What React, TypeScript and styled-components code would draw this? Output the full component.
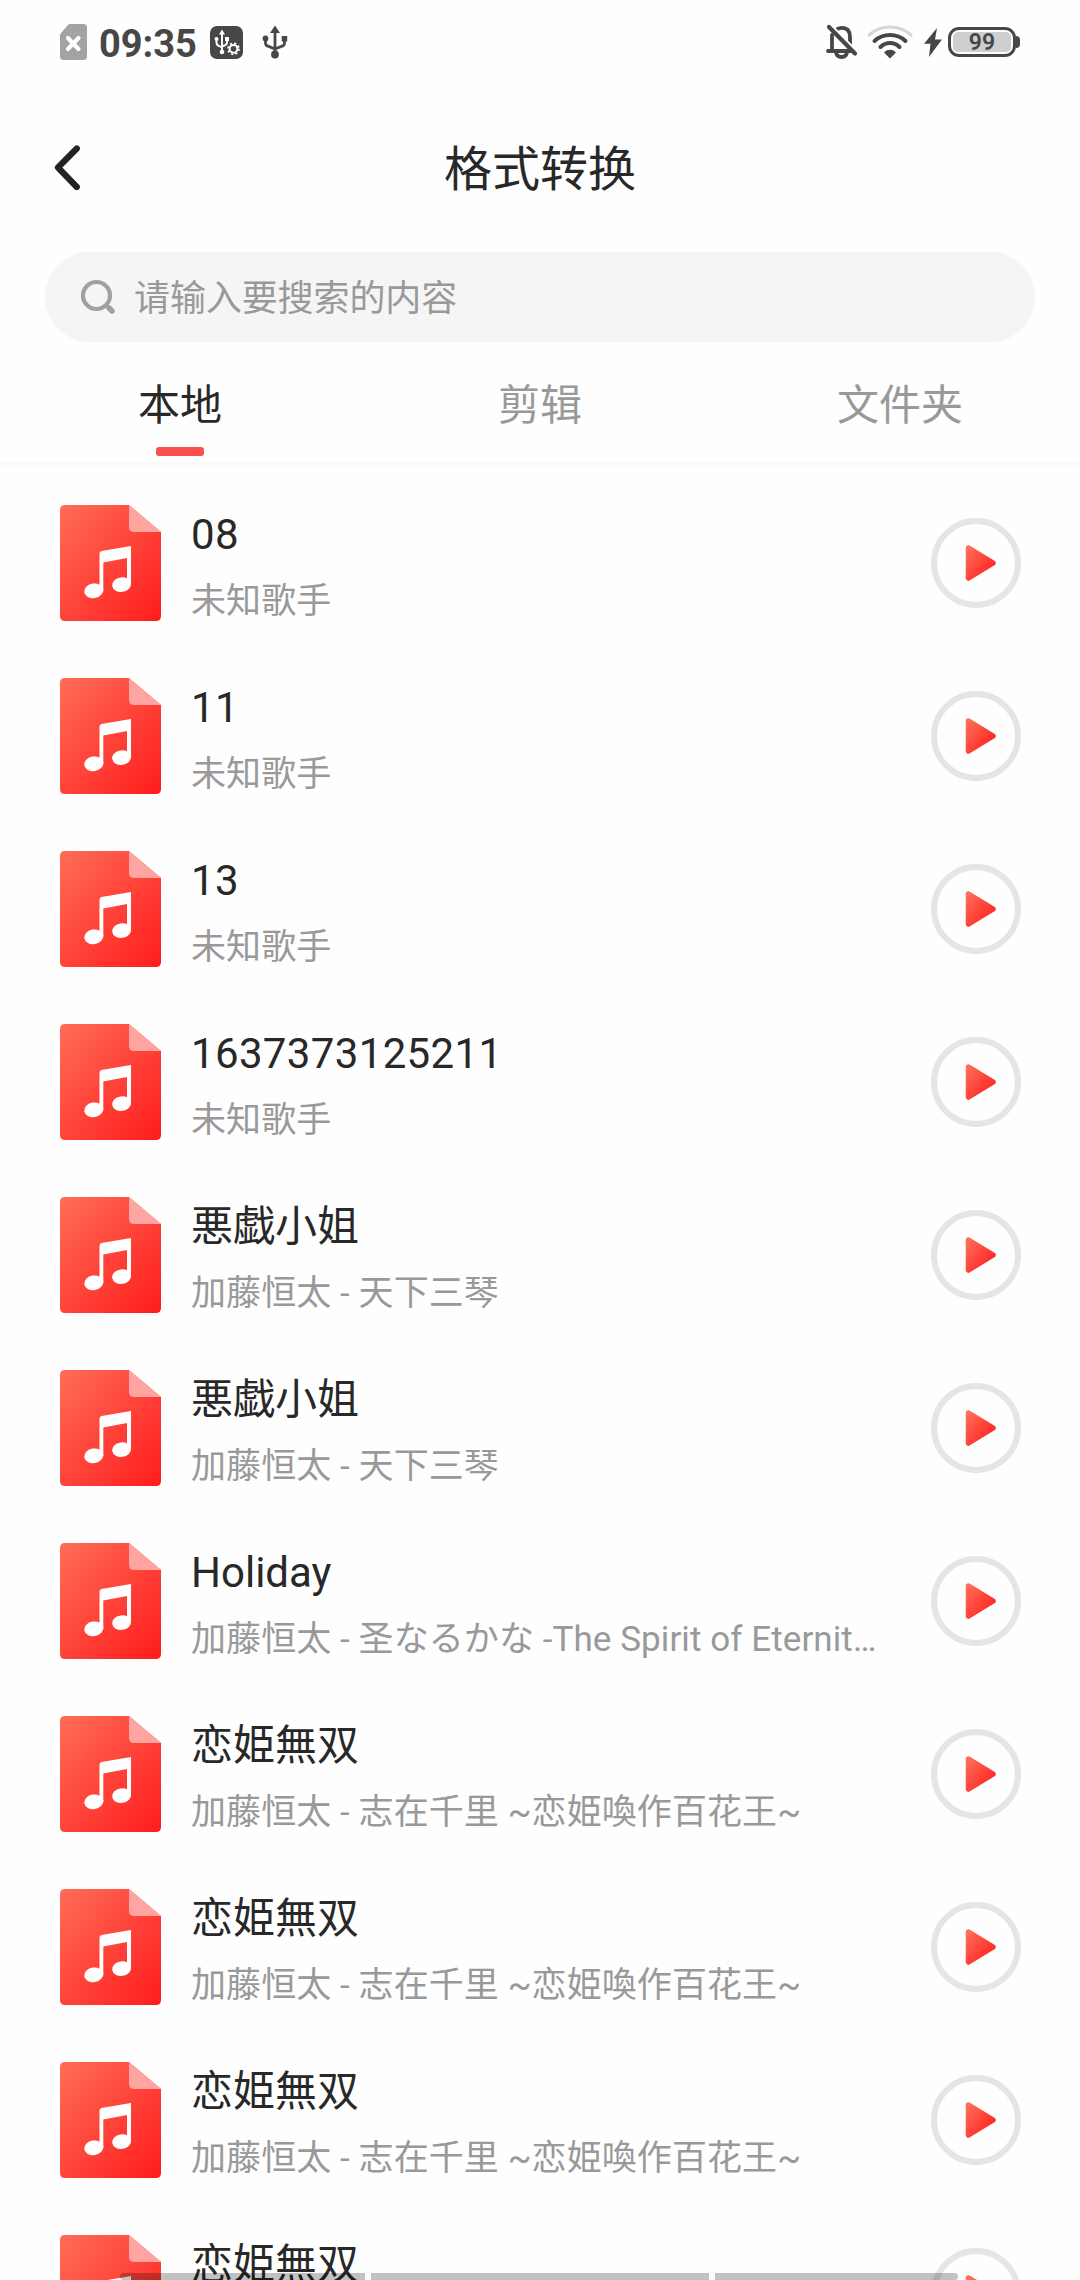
import React from "react";
import styled, { createGlobalStyle } from "styled-components";

const GlobalStyle = createGlobalStyle`
  *, *::before, *::after { box-sizing: border-box; }
  html, body { margin: 0; padding: 0; background: #fefefe; }
  body {
    font-family: Roboto, "Noto Sans CJK SC", "Noto Sans CJK JP", sans-serif;
    color: #282828;
  }
  svg { display: block; flex: none; }
  button { font: inherit; color: inherit; background: none; border: 0; padding: 0; }
`;

const Screen = styled.main`
  position: relative;
  display: flex;
  flex-direction: column;
  width: 1080px;
  height: 2280px;
  overflow: hidden;
  background: #fefefe;
`;

const StatusBar = styled.header`
  flex: none;
  display: flex;
  align-items: center;
  justify-content: space-between;
  height: 84px;
  padding: 0 60px;
`;

const StatusGroup = styled.div<{ $gap: number }>`
  display: flex;
  align-items: center;
  gap: ${(p) => p.$gap}px;
`;

const Clock = styled.time`
  width: 97px;
  margin: 3px 0 0 -2px;
  font-size: 38px;
  font-weight: 700;
  line-height: 44px;
  color: #474747;
  white-space: nowrap;
`;

const UsbGroup = styled.div`
  display: flex;
  align-items: center;
  gap: 19px;
`;

const Power = styled.div`
  display: flex;
  align-items: center;
  gap: 6px;
`;

const Battery = styled.div`
  display: flex;
  align-items: center;
`;

const BatteryBody = styled.div`
  width: 68px;
  height: 30px;
  padding: 2px;
  border: 3px solid #474747;
  border-radius: 11px;
`;

const BatteryLevel = styled.div`
  height: 20px;
  border-radius: 5px;
  background: #cfcfcf;
  font-size: 23px;
  font-weight: 600;
  line-height: 21px;
  text-align: center;
  color: #474747;
`;

const BatteryTip = styled.i`
  width: 4px;
  height: 12px;
  border-radius: 0 4px 4px 0;
  background: #474747;
`;

const TitleBar = styled.div`
  flex: none;
  display: grid;
  grid-template-columns: 135px 1fr 135px;
  align-items: center;
  height: 168px;
`;

const BackButton = styled.button`
  display: flex;
  padding-left: 52px;
`;

const Title = styled.h1`
  margin: 0;
  padding-top: 3px;
  font-size: 48px;
  font-weight: 400;
  line-height: 60px;
  text-align: center;
`;

const SearchBox = styled.div`
  flex: none;
  display: flex;
  align-items: center;
  gap: 18px;
  height: 90px;
  margin: 0 45px;
  padding-left: 35px;
  border-radius: 45px;
  background: #f5f5f5;
`;

const Placeholder = styled.span`
  padding-top: 4px;
  font-size: 36px;
  line-height: 44px;
  letter-spacing: -0.1px;
  color: #999;
`;

const Tabs = styled.nav`
  flex: none;
  display: grid;
  grid-template-columns: repeat(3, 1fr);
  height: 120px;
  background: #fefefe;
  box-shadow: 0 3px 5px rgba(0, 0, 0, 0.035);
`;

const Tab = styled.button<{ $active: boolean }>`
  display: flex;
  flex-direction: column;
  align-items: center;
  padding-top: 34px;
  font-size: 42px;
  line-height: 60px;
  color: ${(p) => (p.$active ? "#282828" : "#999")};

  &::after {
    content: "";
    width: 48px;
    height: 9px;
    margin-top: 11px;
    border-radius: 3px;
    background: ${(p) => (p.$active ? "#f8514f" : "transparent")};
  }
`;

const SongList = styled.ul`
  flex: 1;
  min-height: 0;
  margin: 0;
  padding: 14px 0 0;
  overflow: hidden;
  list-style: none;
`;

const SongRow = styled.li`
  display: flex;
  align-items: center;
  height: 173px;
  padding: 0 59px 0 60px;
`;

const SongText = styled.div`
  flex: 1;
  min-width: 0;
  margin-left: 30px;
  padding-top: 9px;
`;

const SongTitle = styled.div<{ $numeric: boolean }>`
  font-size: 42px;
  line-height: 50px;
  letter-spacing: ${(p) => (p.$numeric ? "0.35px" : "normal")};
  white-space: nowrap;
`;

const SongArtist = styled.div`
  width: 691px;
  margin-top: 20px;
  font-size: 35px;
  line-height: 44px;
  letter-spacing: 0.08px;
  color: #999;
  overflow: hidden;
  text-overflow: ellipsis;
  white-space: nowrap;
`;

const PlayButton = styled.button`
  flex: none;
  display: flex;
  align-items: center;
  width: 90px;
  height: 90px;
  padding-left: 28px;
  border: 6px solid #e5e5e5;
  border-radius: 50%;
`;

const NavHints = styled.div`
  position: absolute;
  left: 120px;
  bottom: 0;
  display: grid;
  grid-template-columns: 245px 338px 243px;
  gap: 6px;
  height: 7px;
`;

const NavHint = styled.i`
  background: rgba(0, 0, 0, 0.24);

  &:first-child { border-radius: 4px 0 0 4px; }
  &:last-child { border-radius: 0 4px 4px 0; }
`;

const ink = "#474747";

const SimIcon = () => (
  <svg width="27" height="36" viewBox="0 0 27 36">
    <path d="M10 0H23.5Q27 0 27 3.5V32.500Q27 36 23.500 36H3.500Q0 36 0 32.500V11.500Q0 10 1 9L8 1Q9 0 10 0Z" fill="#a3a3a3" />
    <path d="M8 14 18.500 25M18.500 14 8 25" stroke="#fff" strokeWidth="4.200" strokeLinecap="round" />
  </svg>
);

const UsbSettingsIcon = () => (
  <svg width="33" height="33" viewBox="0 0 33 33">
    <rect width="33" height="33" rx="7" fill={ink} />
    <g fill="none" stroke="#fff" strokeWidth="1.900">
      <path d="M12 7V26M6.500 13V16.500Q6.500 19 9 20L12 21.500M17 12V16Q17 18.500 14.500 19.500L12 20.500" />
      <circle cx="23.500" cy="22.800" r="3.900" strokeWidth="2" />
      <circle cx="23.500" cy="22.800" r="5.500" strokeWidth="1.700" strokeDasharray="2.160 2.160" />
    </g>
    <path d="M12 3.500 15 8.500H9Z" fill="#fff" />
    <circle cx="6.500" cy="13" r="2" fill="#fff" />
    <rect x="15" y="11" width="4" height="4" fill="#fff" />
    <circle cx="12" cy="26" r="2.300" fill="#fff" />
  </svg>
);

const UsbIcon = () => (
  <svg width="26" height="34" viewBox="0 0 26 34">
    <path d="M13 5V29M3.500 14V18Q3.500 20.500 6 21.200L13 24M22.500 14V18Q22.500 20.500 20 21.200L13 24" fill="none" stroke={ink} strokeWidth="2.800" />
    <path d="M13 .500 18 8H8Z" fill={ink} />
    <circle cx="3.500" cy="13.500" r="2.900" fill={ink} />
    <rect x="19.700" y="11" width="5.500" height="5.500" fill={ink} />
    <circle cx="13" cy="29.500" r="3.900" fill={ink} />
  </svg>
);

const BellOffIcon = () => (
  <svg width="32" height="36" viewBox="0 0 32 36" fill="none" stroke={ink} strokeWidth="3.800">
    <path d="M6 11V27H2M6 27H26M11.500 5Q13 3.800 16 3.800Q24 3.800 24 13V22" strokeLinecap="round" />
    <path d="M10 28Q10.500 33 15.500 33T21 28" />
    <path d="M4.500 1 32 29" stroke="#fefefe" strokeWidth="3" />
    <path d="M3 3 29 29.500" strokeWidth="4.200" strokeLinecap="round" />
  </svg>
);

const WifiIcon = () => (
  <svg width="46" height="34" viewBox="1 0 46 34" fill="none" strokeLinecap="round">
    <path d="M2 10Q11 2 23 2T44 10" stroke="#d6d6d6" strokeWidth="3.200" />
    <path d="M7.500 16Q14 10 23 10T38.500 16" stroke={ink} strokeWidth="4" />
    <path d="M13.500 22Q17.500 18 23 18T32.500 22" stroke={ink} strokeWidth="4" />
    <path d="M18 27.500Q20 25.500 23 25.500T28 27.500L23 32.500Z" fill={ink} stroke={ink} strokeWidth="1.500" strokeLinejoin="round" />
  </svg>
);

const BoltIcon = () => (
  <svg width="18" height="29" viewBox="0 0 18 29">
    <path d="M13 0 0 15.800H6.500L5 29 18 11.500H11Z" fill={ink} />
  </svg>
);

const BackIcon = () => (
  <svg width="30" height="48" viewBox="0 0 30 48">
    <path d="M24.800 4.500 6 23.500 24.800 43" fill="none" stroke="#222" strokeWidth="6.200" strokeLinecap="round" strokeLinejoin="round" />
  </svg>
);

const SearchIcon = () => (
  <svg width="36" height="36" viewBox="0 0 36 36" fill="none" stroke="#a0a0a0">
    <circle cx="16.500" cy="16.500" r="13.500" strokeWidth="4.200" />
    <path d="M29 29 32 32" strokeWidth="5.500" strokeLinecap="round" />
  </svg>
);

const GradientDefs = styled.svg`
  position: absolute;
`;

const Gradients = () => (
  <GradientDefs width="0" height="0">
    <defs>
      <linearGradient id="sheet" x1="0" y1="0" x2="1" y2="1">
        <stop offset="0" stopColor="#ff6d58" />
        <stop offset="1" stopColor="#ff1c1c" />
      </linearGradient>
    </defs>
  </GradientDefs>
);

const CoverIcon = () => (
  <svg width="101" height="116" viewBox="0 0 101 116">
    <path d="M5 0H69L101 27V111Q101 116 96 116H5Q0 116 0 111V5Q0 0 5 0Z" fill="url(#sheet)" />
    <path d="M69 0 101 27H74Q69 27 69 22Z" fill="#ffa5a1" />
    <path d="M39.500 48.500Q39.500 46.500 41.500 46L71 41V79H67V53L43.300 57.500V86H39.500Z" fill="#fff" />
    <ellipse cx="33.800" cy="85.800" rx="9.600" ry="7.300" transform="rotate(-9 33.800 85.800)" fill="#fff" />
    <ellipse cx="61.600" cy="79.600" rx="9.500" ry="7.300" transform="rotate(-9 61.600 79.600)" fill="#fff" />
  </svg>
);

const PlayIcon = () => (
  <svg width="31" height="38" viewBox="0 0 31 38">
    <path d="M3.500 4 28 19 3.500 34Z" fill="url(#sheet)" stroke="url(#sheet)" strokeWidth="5.500" strokeLinejoin="round" />
  </svg>
);

const tabs = ["本地", "剪辑", "文件夹"];

const unknown = "未知歌手";
const koihime = { title: "恋姫無双", artist: "加藤恒太 - 志在千里 ~恋姫喚作百花王~" };
const songs = [
  { title: "08", artist: unknown },
  { title: "11", artist: unknown },
  { title: "13", artist: unknown },
  { title: "1637373125211", artist: unknown },
  { title: "悪戯小姐", artist: "加藤恒太 - 天下三琴" },
  { title: "悪戯小姐", artist: "加藤恒太 - 天下三琴" },
  { title: "Holiday", artist: "加藤恒太 - 圣なるかな -The Spirit of Eternit…" },
  koihime,
  koihime,
  koihime,
  koihime,
];

export default function App() {
  return (
    <>
      <GlobalStyle />
      <Gradients />
      <Screen>
        <StatusBar>
          <StatusGroup $gap={14}>
            <SimIcon />
            <Clock>09:35</Clock>
            <UsbGroup>
              <UsbSettingsIcon />
              <UsbIcon />
            </UsbGroup>
          </StatusGroup>
          <StatusGroup $gap={10}>
            <BellOffIcon />
            <WifiIcon />
            <Power>
              <BoltIcon />
              <Battery>
                <BatteryBody>
                  <BatteryLevel>99</BatteryLevel>
                </BatteryBody>
                <BatteryTip />
              </Battery>
            </Power>
          </StatusGroup>
        </StatusBar>
        <TitleBar>
          <BackButton aria-label="返回">
            <BackIcon />
          </BackButton>
          <Title>格式转换</Title>
        </TitleBar>
        <SearchBox>
          <SearchIcon />
          <Placeholder>请输入要搜索的内容</Placeholder>
        </SearchBox>
        <Tabs>
          {tabs.map((label, i) => (
            <Tab key={label} $active={i === 0}>
              {label}
            </Tab>
          ))}
        </Tabs>
        <SongList>
          {songs.map((song, i) => (
            <SongRow key={i}>
              <CoverIcon />
              <SongText>
                <SongTitle $numeric={/^\d+$/.test(song.title)}>{song.title}</SongTitle>
                <SongArtist>{song.artist}</SongArtist>
              </SongText>
              <PlayButton aria-label="播放">
                <PlayIcon />
              </PlayButton>
            </SongRow>
          ))}
        </SongList>
        <NavHints>
          <NavHint />
          <NavHint />
          <NavHint />
        </NavHints>
      </Screen>
    </>
  );
}
